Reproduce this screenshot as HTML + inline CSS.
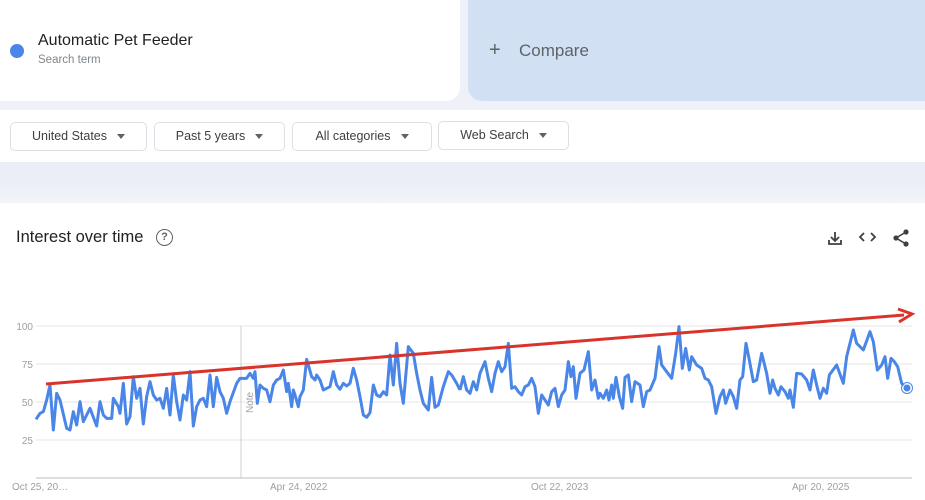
<!DOCTYPE html>
<html><head><meta charset="utf-8"><style>
*{margin:0;padding:0;box-sizing:border-box}
body{width:925px;height:500px;overflow:hidden;background:#eef1f7;font-family:"Liberation Sans",sans-serif;position:relative}
.abs{position:absolute}
.card{left:0;top:0;width:460px;height:101px;background:#fff;border-radius:0 0 14px 0}
.cmp{left:468px;top:0;width:457px;height:101px;background:#d2e0f4;border-radius:0 0 0 14px}
.row{left:0;top:110px;width:925px;height:52px;background:#fff}
.f{position:absolute;top:12px;height:29px;border:1px solid #dcdfe4;border-radius:5px;font-size:12.5px;color:#3c4043;text-align:center;line-height:27px}
.f:after{content:"";display:inline-block;margin-left:10px;border-left:4px solid transparent;border-right:4px solid transparent;border-top:5px solid #5f6368;vertical-align:middle}
.band{left:0;top:162px;width:925px;height:41px;background:linear-gradient(#eaeef7,#eaeef7 50%,#f1f4f9)}
.chart{left:0;top:203px;width:925px;height:297px;background:#fff}
</style></head><body>
<div class="abs card">
 <div class="abs" style="left:10px;top:44px;width:14px;height:14px;border-radius:50%;background:#4a86e8"></div>
 <div class="abs" style="left:38px;top:32px;font-size:16px;color:#202124">Automatic Pet Feeder</div>
 <div class="abs" style="left:38px;top:54px;font-size:11.5px;color:#80868b">Search term</div>
</div>
<div class="abs cmp">
 <div class="abs" style="left:21px;top:39px;font-size:20px;color:#5f6368;line-height:22px">+</div>
 <div class="abs" style="left:51px;top:41px;font-size:17px;color:#5f6368">Compare</div>
</div>
<div class="abs row">
 <div class="f" style="left:10px;width:137px">United States</div>
 <div class="f" style="left:154px;width:131px">Past 5 years</div>
 <div class="f" style="left:292px;width:140px">All categories</div>
 <div class="f" style="left:438px;width:131px;top:11px">Web Search</div>
</div>
<div class="abs band"></div>
<div class="abs chart">
 <div class="abs" style="left:16px;top:25px;font-size:16.5px;color:#202124">Interest over time</div>
 <div class="abs" style="left:156px;top:26px;width:17px;height:17px;border:1.6px solid #5f6368;border-radius:50%;font-size:11px;font-weight:bold;color:#5f6368;text-align:center;line-height:14px">?</div>
</div>
<svg class="abs" style="left:0;top:0" width="925" height="500">
 <g fill="none" stroke="#3c4043" stroke-width="1.8">
  <path d="M835 232v9M831 237l4 4 4-4M829 240v4h12v-4"/>
  <path d="M864 233l-4 4 4 4M871 233l4 4-4 4"/>
 </g>
 <g fill="#3c4043"><circle cx="906" cy="232" r="2.6"/><circle cx="896" cy="238" r="2.6"/><circle cx="906" cy="244" r="2.6"/></g>
 <path d="M906 232L896 238L906 244" stroke="#3c4043" stroke-width="1.6" fill="none"/>
 <g stroke="#e6e6e6" stroke-width="1">
  <line x1="36" y1="326" x2="912" y2="326"/><line x1="36" y1="364" x2="912" y2="364"/>
  <line x1="36" y1="402" x2="912" y2="402"/><line x1="36" y1="440" x2="912" y2="440"/>
 </g>
 <line x1="36" y1="478" x2="912" y2="478" stroke="#bdbdbd"/>
 <line x1="241" y1="326" x2="241" y2="478" stroke="#d0d0d0"/>
 <g font-size="10" fill="#9aa0a6" font-family="Liberation Sans">
  <text x="33" y="330" text-anchor="end">100</text><text x="33" y="368" text-anchor="end">75</text>
  <text x="33" y="406" text-anchor="end">50</text><text x="33" y="444" text-anchor="end">25</text>
  <text x="12" y="490">Oct 25, 20…</text><text x="270" y="490">Apr 24, 2022</text>
  <text x="531" y="490">Oct 22, 2023</text><text x="792" y="490">Apr 20, 2025</text>
  <text transform="translate(253,413) rotate(-90)">Note</text>
 </g>
 <g transform="translate(0,300) scale(0.33333)" fill="none" stroke="#4a86e8" stroke-width="9" stroke-linejoin="round">
  <polyline points="108,358 120,340 130,335 140,300 150,255 160,390 170,280 180,300 200,385 210,390 220,335 230,375 240,305 250,365 260,345 270,325 290,378 300,305 310,345 320,355 335,355 340,295 355,320 360,340 370,250 380,372 390,350 400,230 410,295 420,265 430,372 440,290 450,245 460,285 470,300 480,295 490,325 500,265 510,345 520,225 530,305 540,360 550,285 560,300 570,215 580,378 590,320 600,300 610,295 620,320 630,225 640,320 650,232 660,275 670,295 680,340 690,305 710,250 720,235 740,235 750,220 760,235 765,215 772,310 780,255 790,265 800,270 810,305 820,255 830,240 840,235 850,210 860,275 865,250 875,320 880,270 885,285 895,320 900,290 910,270 920,178 935,230 945,240 950,225 960,240 970,270 980,265 990,260 1000,215 1010,255 1020,268 1030,250 1040,258 1050,250 1060,205 1070,240 1080,290 1090,345 1100,352 1110,338 1120,255 1130,285 1140,290 1150,275 1160,285 1170,165 1180,255 1190,130 1200,250 1210,310 1225,140 1240,160 1250,220 1260,270 1270,310 1285,330 1295,232 1305,322 1315,315 1330,260 1345,215 1355,225 1370,250 1380,270"/>
 </g>
 <g transform="translate(460,300) scale(0.33333)" fill="none" stroke="#4a86e8" stroke-width="9" stroke-linejoin="round">
  <polyline points="0,270 10,230 20,270 30,280 40,245 50,270 60,220 75,185 85,235 95,275 105,220 115,185 125,215 135,200 145,130 155,265 165,260 175,275 185,285 195,260 205,255 215,235 225,260 235,340 245,285 255,300 265,315 275,275 285,265 295,320 305,285 315,270 325,185 333,230 340,200 348,295 360,220 372,210 385,155 395,270 405,240 415,295 420,280 430,295 440,270 447,300 455,255 460,295 468,232 478,290 488,325 495,232 505,225 515,305 525,245 540,255 550,320 560,275 570,270 585,235 597,140 605,195 620,215 635,235 647,160 657,80 667,205 677,145 688,210 695,170 710,195 725,205 735,235 745,240 755,260 768,340 780,290 790,270 797,310 810,270 820,290 830,325 840,240 848,230 858,130 868,180 880,245 890,240 905,160 920,220 930,280 938,240 945,265 955,285 963,260 975,275 985,295 990,270 1000,322 1010,220 1025,222 1040,240 1050,270 1060,210 1070,255 1080,295 1090,265 1100,280 1108,225 1130,195 1150,250 1160,170 1180,90 1190,130 1210,150 1230,95 1240,125 1252,210 1265,195 1275,170 1283,235 1293,175 1303,185 1313,200 1325,250 1340,265"/>
 </g>
 <circle cx="907" cy="388" r="4" fill="#4a86e8" stroke="#fff" stroke-width="1"/>
 <circle cx="907" cy="388" r="5.5" fill="none" stroke="#4a86e8" stroke-width="1"/>
 <line x1="46" y1="384" x2="904" y2="315" stroke="#d9342b" stroke-width="3"/>
 <path d="M898 309L912 314L899 322" fill="none" stroke="#d9342b" stroke-width="3" stroke-linejoin="miter"/>
</svg>
</body></html>
